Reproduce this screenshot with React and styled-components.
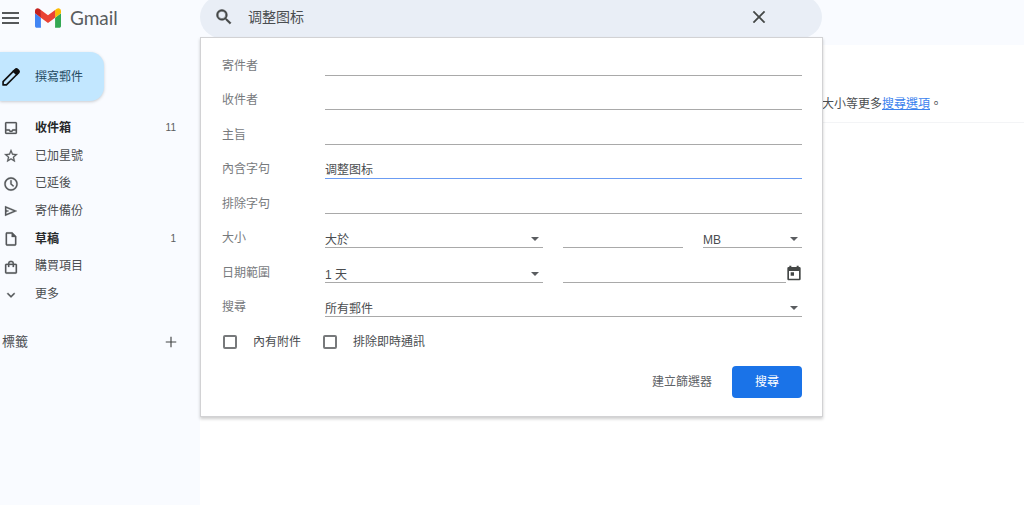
import React from "react";
import styled, { createGlobalStyle, css } from "styled-components";

const GlobalStyle = createGlobalStyle`
  *, *::before, *::after { box-sizing: border-box; }
  body {
    margin: 0;
    background: #fff;
    color: #4a4d50;
    font: 12px/20px "Liberation Sans", "Noto Sans CJK TC", sans-serif;
  }
  button, input, select { font: inherit; color: inherit; }
`;

const Page = styled.div`
  display: flex;
  flex-direction: column;
  min-height: 100vh;
  padding-bottom: 3px;
  overflow: hidden;
`;

const Header = styled.header`
  display: grid;
  grid-template-columns: 200px minmax(0, 1fr) 202px;
  height: 45px;
  background: #f9fbff;
`;

const Brand = styled.div`
  display: flex;
  align-items: center;
  gap: 16px;
  height: 35px;
  padding-left: 2px;
`;

const IconButton = styled.button`
  display: flex;
  padding: 0;
  border: 0;
  background: none;
  color: #444746;
`;

const Logo = styled.a`
  display: flex;
  align-items: center;
  gap: 9px;
  color: #5a5d60;
  font: 19px/24px Lato, sans-serif;
  text-decoration: none;
`;

const SearchArea = styled.div`
  position: relative;
`;

const SearchBar = styled.form`
  display: flex;
  align-items: center;
  height: 42px;
  margin-top: -4px;
  padding: 0 54px 0 14px;
  border-radius: 21px;
  background: #e9eef6;
`;

const SearchInput = styled.input`
  flex: 1;
  min-width: 0;
  margin-left: 14px;
  padding: 0;
  border: 0;
  outline: 0;
  background: none;
  font: 14px/20px "Liberation Sans", "Noto Sans CJK SC", sans-serif;
`;

const Panel = styled.form`
  position: absolute;
  z-index: 2;
  top: 37px;
  left: 0;
  right: -1px;
  padding: 3px 20px 18px 21px;
  border: 1px solid #d2d2d4;
  background: #fff;
  box-shadow: 0 2px 3px rgba(0, 0, 0, 0.2);
`;

const Fields = styled.div`
  display: grid;
  grid-auto-rows: 1fr;
  min-height: 276px;
`;

const FieldRow = styled.div`
  display: grid;
  grid-template-columns: 103px minmax(0, 1fr);
  align-items: end;
`;

const FieldLabel = styled.label`
  color: #777a7d;
`;

const Split = styled.div`
  display: grid;
  grid-template-columns: ${(p) => p.$columns};
  column-gap: 20px;
  align-items: end;
`;

const underline = css`
  width: 100%;
  height: 20px;
  padding: 2px 0 0;
  border: 0;
  border-bottom: 1px solid ${(p) => (p.$active ? "#6b9cf3" : "#a9a9a9")};
  border-radius: 0;
  outline: 0;
  background: none;
`;

const TextInput = styled.input`
  ${underline}
  font-family: "Liberation Sans", "Noto Sans CJK SC", sans-serif;
`;

const SelectBox = styled.div`
  display: grid;
  grid-template-columns: minmax(0, 1fr) 12px;
  align-items: center;

  svg {
    grid-area: 1 / 2;
    margin-top: 2px;
    pointer-events: none;
  }
`;

const Select = styled.select`
  ${underline}
  grid-area: 1 / 1 / 2 / 3;
  appearance: none;
`;

const DateField = styled.div`
  display: flex;
  align-items: end;

  button { padding-bottom: 2px; }
`;

const Checks = styled.div`
  display: flex;
  gap: 22px;
  padding: 15px 0 0 1px;
`;

const CheckLabel = styled.label`
  display: flex;
  align-items: center;
  gap: 16px;
`;

const Checkbox = styled.input.attrs({ type: "checkbox" })`
  appearance: none;
  width: 14px;
  height: 14px;
  margin: 0;
  border: 2px solid #77797b;
  border-radius: 2px;
  background: #fff;
`;

const Actions = styled.div`
  display: flex;
  justify-content: flex-end;
  gap: 20px;
  padding-top: 14px;
`;

const Button = styled.button`
  height: 32px;
  padding: 0 ${(p) => (p.$primary ? 23 : 0)}px;
  border: 0;
  border-radius: 4px;
  background: ${(p) => (p.$primary ? "#1a73e8" : "none")};
  color: ${(p) => (p.$primary ? "#fff" : "#5f6368")};
`;

const Body = styled.div`
  display: flex;
  flex: 1;
`;

const Sidebar = styled.aside`
  flex: 0 0 200px;
  background: #f9fbff;
`;

const Compose = styled.button`
  display: flex;
  align-items: center;
  gap: 14px;
  width: 104px;
  height: 49px;
  margin-top: 7px;
  padding: 0 0 0 1px;
  border: 0;
  border-radius: 0 14px 14px 0;
  background: #c2e7ff;
  box-shadow: 0 1px 3px rgba(60, 64, 67, 0.25);
  color: #244a62;
`;

const Nav = styled.nav`
  display: grid;
  grid-auto-rows: 1fr;
  min-height: 194px;
  margin-top: 13px;
`;

const NavLink = styled.a`
  display: flex;
  align-items: center;
  padding: 0 24px 0 3px;
  color: ${(p) => (p.$bold ? "#27292b" : "#4a4d50")};
  font-weight: ${(p) => (p.$bold ? 700 : 400)};
  text-decoration: none;

  svg { margin-top: 1px; }
`;

const NavText = styled.span`
  flex: 1;
  margin-left: 16px;
`;

const Count = styled.span`
  font-size: 10px;
  font-weight: 400;
  color: #5a5d60;
`;

const Labels = styled.div`
  display: flex;
  align-items: center;
  justify-content: space-between;
  margin-top: 24px;
  padding: 0 22px 0 2px;
`;

const LabelsTitle = styled.h2`
  margin: 0;
  font-size: 13px;
  font-weight: 400;
`;

const Main = styled.main`
  flex: 1;
  min-width: 0;
  padding-top: 49px;
`;

const Notice = styled.p`
  margin: 0;
  padding: 0 82px 8px 0;
  border-bottom: 1px solid #f3f4f6;
  text-align: right;

  a { color: #3b82ee; }
`;

const Glyph = ({ size = 16, children, ...rest }) => (
  <svg width={size} height={size} viewBox="0 0 24 24" fill="currentColor" aria-hidden="true" {...rest}>
    {children}
  </svg>
);

const Arrow = () => (
  <svg width="8" height="4" viewBox="0 0 8 4" fill="#5a5d60" aria-hidden="true">
    <path d="M0 0h8L4 4z" />
  </svg>
);

const GmailMark = () => (
  <svg width="26" height="20" viewBox="52 42 88 66" aria-hidden="true">
    <path fill="#4285f4" d="M58 108h14V74L52 59v43c0 3.32 2.69 6 6 6" />
    <path fill="#34a853" d="M120 108h14c3.32 0 6-2.69 6-6V59l-20 15" />
    <path fill="#fbbc04" d="M120 48v26l20-15v-8c0-7.42-8.47-11.65-14.4-7.2" />
    <path fill="#ea4335" d="M72 74V48l24 18 24-18v26L96 92" />
    <path fill="#c5221f" d="M52 51v8l20 15V48l-5.6-4.2c-5.94-4.45-14.4-.22-14.4 7.2" />
  </svg>
);

const icons = {
  inbox: "M19 3H5a2 2 0 0 0-2 2v14c0 1.1.9 2 2 2h14a2 2 0 0 0 2-2V5a2 2 0 0 0-2-2zm0 16H5v-3h3.56c.69 1.19 1.97 2 3.45 2s2.75-.81 3.45-2H19v3zm0-5h-4.99c0 1.1-.9 2-2 2s-2-.9-2-2H5V5h14v9z",
  star: "M22 9.24l-7.19-.62L12 2 9.19 8.63 2 9.24l5.46 4.73L5.82 21 12 17.27 18.18 21l-1.63-7.03L22 9.24zM12 15.4l-3.76 2.27 1-4.28-3.32-2.88 4.38-.38L12 6.1l1.71 4.04 4.38.38-3.32 2.88 1 4.28L12 15.4z",
  clock: "M12 2C6.480 2 2 6.480 2 12s4.480 10 10 10 10-4.480 10-10S17.520 2 12 2zm0 18a8 8 0 1 1 0-16 8 8 0 0 1 0 16zm1-13.500h-2v6l4.300 3.700 1.200-1.500-3.500-3V6.500z",
  send: "M3 4.500v15L21 12 3 4.500zm2 3L16 12 5 16.500v-3l4-1.500-4-1.500v-3z",
  draft: "M14 2H6a2 2 0 0 0-2 2v16c0 1.1.9 2 2 2h12a2 2 0 0 0 2-2V8l-6-6zM6 20V4h7v5h5v11H6z",
  bag: "M19 7h-2.500a4.500 4.500 0 0 0-9 0H5a2 2 0 0 0-2 2v11c0 1.1.9 2 2 2h14a2 2 0 0 0 2-2V9a2 2 0 0 0-2-2zm-7-2.500A2.500 2.500 0 0 1 14.500 7h-5A2.500 2.500 0 0 1 12 4.500zM19 20H5V9h2.500v3h2V9h5v3h2V9H19v11z",
  more: "M7.41 8.59 12 13.17l4.59-4.58L18 10l-6 6-6-6z",
};

const mailboxes = [
  { icon: "inbox", text: "收件箱", count: 11 },
  { icon: "star", text: "已加星號" },
  { icon: "clock", text: "已延後" },
  { icon: "send", text: "寄件備份" },
  { icon: "draft", text: "草稿", count: 1 },
  { icon: "bag", text: "購買項目" },
  { icon: "more", text: "更多" },
];

const textFields = [
  { id: "from", text: "寄件者" },
  { id: "to", text: "收件者" },
  { id: "subject", text: "主旨" },
  { id: "has", text: "內含字句", value: "调整图标", active: true },
  { id: "hasnot", text: "排除字句" },
];

const Dropdown = ({ option, ...rest }) => (
  <SelectBox>
    <Select {...rest}>
      <option>{option}</option>
    </Select>
    <Arrow />
  </SelectBox>
);

function AdvancedSearch() {
  return (
    <Panel onSubmit={(e) => e.preventDefault()}>
      <Fields>
        {textFields.map((f) => (
          <FieldRow key={f.id}>
            <FieldLabel htmlFor={f.id}>{f.text}</FieldLabel>
            <TextInput id={f.id} defaultValue={f.value} $active={f.active} />
          </FieldRow>
        ))}
        <FieldRow>
          <FieldLabel htmlFor="size">大小</FieldLabel>
          <Split $columns="218fr 120fr 99fr">
            <Dropdown id="size" option="大於" />
            <TextInput aria-label="大小" />
            <Dropdown aria-label="單位" option="MB" />
          </Split>
        </FieldRow>
        <FieldRow>
          <FieldLabel htmlFor="range">日期範圍</FieldLabel>
          <Split $columns="218fr 239fr">
            <Dropdown id="range" option="1 天" />
            <DateField>
              <TextInput aria-label="日期" />
              <IconButton type="button" aria-label="選擇日期">
                <Glyph size={16}>
                  <path d="M20 3h-1V1h-3v2H8V1H5v2H4a2 2 0 0 0-2 2v16c0 1.1.9 2 2 2h16a2 2 0 0 0 2-2V5a2 2 0 0 0-2-2zm-.5 17.500h-15V9h15v11.500zM7 11h5v5H7z" />
                </Glyph>
              </IconButton>
            </DateField>
          </Split>
        </FieldRow>
        <FieldRow>
          <FieldLabel htmlFor="scope">搜尋</FieldLabel>
          <Dropdown id="scope" option="所有郵件" />
        </FieldRow>
      </Fields>
      <Checks>
        <CheckLabel><Checkbox />內有附件</CheckLabel>
        <CheckLabel><Checkbox />排除即時通訊</CheckLabel>
      </Checks>
      <Actions>
        <Button type="button">建立篩選器</Button>
        <Button type="submit" $primary>搜尋</Button>
      </Actions>
    </Panel>
  );
}

export default function App() {
  return (
    <Page>
      <GlobalStyle />
      <Header>
        <Brand>
          <IconButton type="button" aria-label="主選單">
            <svg width="17" height="12" viewBox="0 0 17 12" fill="#55585a" aria-hidden="true">
              <path d="M0 0h17v2H0zM0 5h17v2H0zM0 10h17v2H0z" />
            </svg>
          </IconButton>
          <Logo href="#"><GmailMark />Gmail</Logo>
        </Brand>
        <SearchArea>
          <SearchBar onSubmit={(e) => e.preventDefault()}>
            <IconButton type="submit" aria-label="搜尋郵件">
              <Glyph size={20} stroke="currentColor" strokeWidth="0.6">
                <path d="M15.5 14h-.79l-.28-.27A6.47 6.47 0 0 0 16 9.5 6.5 6.5 0 1 0 9.5 16c1.61 0 3.09-.59 4.23-1.57l.27.28v.79l5 4.99L20.49 19l-4.99-5zm-6 0a4.5 4.5 0 1 1 0-9 4.5 4.5 0 0 1 0 9z" />
              </Glyph>
            </IconButton>
            <SearchInput aria-label="搜尋郵件" defaultValue="调整图标" />
            <IconButton type="button" aria-label="清除搜尋">
              <Glyph size={18} stroke="currentColor" strokeWidth="0.6">
                <path d="M20 5.4 18.6 4 12 10.6 5.4 4 4 5.4l6.6 6.6L4 18.6 5.4 20l6.6-6.6 6.6 6.6 1.4-1.4-6.6-6.6z" />
              </Glyph>
            </IconButton>
          </SearchBar>
          <AdvancedSearch />
        </SearchArea>
      </Header>
      <Body>
        <Sidebar>
          <Compose type="button">
            <Glyph size={20} fill="none" stroke="#111" strokeWidth="2" strokeLinejoin="round">
              <path d="M2.500 17.500 15 5l4 4L6.500 21.500h-4z" />
              <path d="M15 5l2-2c1-1 2-1 3 0l1 1c1 1 1 2 0 3l-2 2z" fill="#111" />
            </Glyph>
            撰寫郵件
          </Compose>
          <Nav>
            {mailboxes.map((m) => (
              <NavLink href="#" key={m.icon} $bold={m.count}>
                <Glyph size={16} color="#55585a" stroke="currentColor" strokeWidth="0.4"><path d={icons[m.icon]} /></Glyph>
                <NavText>{m.text}</NavText>
                {m.count && <Count>{m.count}</Count>}
              </NavLink>
            ))}
          </Nav>
          <Labels>
            <LabelsTitle>標籤</LabelsTitle>
            <IconButton type="button" aria-label="新增標籤">
              <Glyph size={14}><path d="M21 13h-8v8h-2v-8H3v-2h8V3h2v8h8z" /></Glyph>
            </IconButton>
          </Labels>
        </Sidebar>
        <Main>
          <Notice>大小等更多<a href="#">搜尋選項</a>。</Notice>
        </Main>
      </Body>
    </Page>
  );
}
